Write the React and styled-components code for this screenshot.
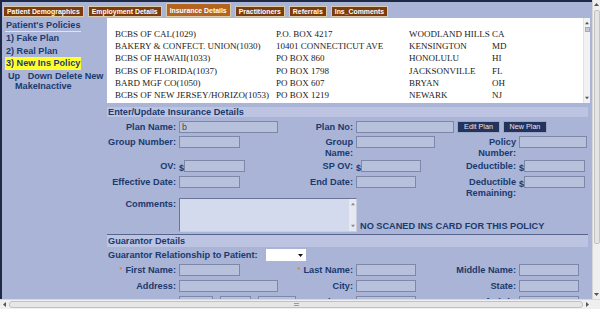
import React from 'react';
import styled, { createGlobalStyle } from 'styled-components';

const C = {
  bg: '#a9b4d6',
  navy: '#1b3a6e',
  bar: '#bdc4e2',
  field: '#b8c1dc',
  fieldBorder: '#7d87a7',
  frame: '#1e2946',
};

const Global = createGlobalStyle`
  html, body { margin: 0; padding: 0; background: ${C.bg}; overflow: hidden; }
  #root { width: 600px; height: 309px; }
  * { box-sizing: border-box; }
`;

const Viewport = styled.div`
  width: 600px;
  height: 309px;
  display: flex;
  flex-direction: column;
  font-family: "Liberation Sans", Arial, sans-serif;
  background: ${C.bg};
`;

const MainRow = styled.div`
  display: flex;
  height: 299px;
`;

const Frame = styled.div`
  width: 592px;
  height: 299px;
  border-top: 2px solid ${C.frame};
  border-left: 2px solid ${C.frame};
  background: ${C.bg};
  overflow: hidden;
  display: flex;
  flex-direction: column;
`;

const TabBar = styled.nav`
  height: 15px;
  flex: none;
  display: flex;
  align-items: flex-end;
  gap: 4px;
  padding-left: 1px;
`;

const Tab = styled.div`
  height: ${(p) => (p.$active ? 14 : 11)}px;
  padding: 0 3px;
  background: ${(p) => (p.$active ? '#b4641f' : '#7b3b0c')};
  border: 1px solid #dccbab;
  color: #fff;
  font-weight: bold;
  font-size: 6.9px;
  display: flex;
  align-items: center;
  white-space: nowrap;
`;

const Body = styled.div`
  display: flex;
  flex: 1;
  min-height: 0;
`;

const Sidebar = styled.aside`
  width: 105px;
  flex: none;
  padding: 3px 0 0 4px;
  color: ${C.navy};
  font-weight: bold;
  font-size: 9.1px;
`;

const SideHeading = styled.div`
  display: inline-block;
  margin-left: -1px;
  padding: 0 1px;
  line-height: 11px;
  border-bottom: 1px solid #dfe3f1;
`;

const PolicyItem = styled.div`
  line-height: 12.5px;
  span {
    display: inline-block;
    margin-left: -1px;
    padding: 0 1px;
    background: ${(p) => (p.$selected ? '#ffff2e' : 'transparent')};
  }
`;

const Actions = styled.div`
  margin-top: 1px;
  line-height: 10.5px;
`;

const ActionRow = styled.div`
  display: flex;
  gap: 2.5px;
  padding-left: ${(p) => p.$indent || 2}px;
`;

const ActionLink = styled.span`
  margin-right: ${(p) => (p.$wide ? 5 : 0)}px;
`;

const Content = styled.main`
  width: 483px;
  flex: none;
  display: flex;
  flex-direction: column;
`;

const ListBox = styled.div`
  margin-top: 1px;
  height: 85px;
  width: 483px;
  flex: none;
  background: #fff;
  display: flex;
`;

const ListTable = styled.div`
  flex: 1;
  padding: 10px 0 0 8px;
  display: grid;
  grid-template-columns: 161px 133px 83px auto;
  grid-auto-rows: 12.2px;
  align-content: start;
  font-family: "Liberation Serif", "Times New Roman", serif;
  font-size: 9px;
  line-height: 12.2px;
  color: #1a1a1a;
  white-space: nowrap;
`;

const MiniScroll = styled.div`
  width: 7px;
  flex: none;
  background: #f2f2f2;
  border-left: 1px solid #e2e2e2;
  display: flex;
  flex-direction: column;
  align-items: center;
  padding: 3px 0 3px;
`;

const MiniThumb = styled.div`
  width: 5px;
  height: 5px;
  margin-top: 2px;
  background: #c9c9d6;
  border: 1px solid #a8a8b8;
`;

const Spacer = styled.div`
  flex: 1;
`;

const SectionBar = styled.div`
  width: 481px;
  height: ${(p) => p.$h}px;
  margin-top: ${(p) => p.$mt || 0}px;
  flex: none;
  background: ${C.bar};
  color: ${C.navy};
  font-weight: bold;
  font-size: 9.2px;
  line-height: ${(p) => p.$h}px;
  padding-left: 1px;
  white-space: nowrap;
`;

const Divider = styled.div`
  width: 481px;
  height: 1px;
  margin-top: 2px;
  background: #56648e;
  flex: none;
`;

const FormGrid = styled.div`
  width: 481px;
  margin-top: ${(p) => p.$mt}px;
  display: grid;
  grid-template-columns: 72px 110px 67px 99px 64px 69px;
  grid-template-rows: ${(p) => p.$rows};
  row-gap: ${(p) => p.$gap}px;
  flex: none;
`;

const Label = styled.div`
  color: ${C.navy};
  font-weight: bold;
  font-size: 9.2px;
  line-height: 10.5px;
  padding-top: 1px;
  padding-right: 3px;
  text-align: right;
  white-space: nowrap;
`;

const Req = styled.span`
  color: #e0812c;
  font-size: 7px;
  margin-right: 3px;
  vertical-align: 1px;
`;

const Field = styled.div`
  display: flex;
  align-items: flex-start;
  gap: ${(p) => p.$gap || 0}px;
  grid-column: ${(p) => p.$span || 'auto'};
`;

const Input = styled.input`
  width: ${(p) => p.$w}px;
  height: 12px;
  flex: none;
  margin: 0;
  padding: 0 2px;
  border: 1px solid ${C.fieldBorder};
  background: ${C.field};
  font-family: Arial, "Liberation Sans", sans-serif;
  font-size: 9px;
  color: #5c4428;
  outline: none;
`;

const Dollar = styled.span`
  width: 5px;
  flex: none;
  color: ${C.navy};
  font-weight: bold;
  font-size: 9px;
  line-height: 10px;
  padding-top: 3px;
`;

const PlanButton = styled.button`
  width: ${(p) => p.$w}px;
  height: 12px;
  margin: 0 0 0 3px;
  padding: 0;
  flex: none;
  background: #22335c;
  border: 1px solid #9aa6c8;
  color: #e3e9f7;
  font-family: Arial, "Liberation Sans", sans-serif;
  font-size: 7.2px;
  line-height: 10px;
`;

const CommentBox = styled.div`
  width: 178px;
  height: 34px;
  flex: none;
  display: flex;
  background: #d3daee;
  border: 1px solid #6c7493;
  border-right-color: #c8cee0;
  border-bottom-color: #c8cee0;
`;

const CommentScroll = styled.div`
  width: 7px;
  margin-left: auto;
  background: #e6e9f2;
  display: flex;
  flex-direction: column;
  align-items: center;
  padding: 3px 0;
`;

const Note = styled.span`
  margin-left: 3px;
  color: ${C.navy};
  font-weight: bold;
  font-size: 9.2px;
  line-height: 10px;
  white-space: nowrap;
  padding-bottom: 1px;
`;

const CommentField = styled(Field)`
  align-items: flex-end;
`;

const RelRow = styled.div`
  margin-top: 2px;
  height: 12px;
  display: flex;
  align-items: center;
  gap: 8px;
  padding-left: 1px;
  flex: none;
`;

const RelLabel = styled.span`
  color: ${C.navy};
  font-weight: bold;
  font-size: 9.2px;
  white-space: nowrap;
`;

const SelectBox = styled.div`
  width: 40px;
  height: 12px;
  background: #fff;
  display: flex;
  align-items: center;
  justify-content: flex-end;
  padding-right: 3px;
`;

const VScroll = styled.div`
  width: 8px;
  height: 299px;
  flex: none;
  background: #efefef;
  border-left: 1px solid #d6d6d6;
  display: flex;
  flex-direction: column;
  align-items: center;
  padding: 2px 0 2px;
`;

const VThumb = styled.div`
  width: 6px;
  height: 234px;
  margin-top: 3px;
  background: #e4e4e4;
  border: 1px solid #c4c4c4;
  border-radius: 2px;
`;

const HScroll = styled.div`
  height: 10px;
  display: flex;
  align-items: center;
  background: #efefef;
  border-top: 1px solid #d8d8d8;
`;

const HArrow = styled.div`
  width: ${(p) => p.$w}px;
  flex: none;
  display: flex;
  justify-content: center;
  align-items: center;
`;

const HThumb = styled.div`
  flex: 1;
  height: 7px;
  background: #e6e6e6;
  border: 1px solid #c2c2c2;
  border-radius: 3px;
  display: flex;
  justify-content: center;
  align-items: center;
`;

const Grip = styled.div`
  width: 5px;
  height: 3px;
  border-top: 1px solid #9a9a9a;
  border-bottom: 1px solid #9a9a9a;
`;

const Corner = styled.div`
  width: 8px;
  flex: none;
`;

const Tri = ({ dir = 'down', size = 5, color = '#555' }) => {
  const pts = {
    up: '0,4 5,4 2.5,1',
    down: '0,1 5,1 2.5,4',
    left: '4,0 4,5 1,2.5',
    right: '1,0 1,5 4,2.5',
  }[dir];
  return (
    <svg width={size} height={size} viewBox="0 0 5 5" style={{ display: 'block' }}>
      <polygon points={pts} fill={color} />
    </svg>
  );
};

const tabs = ['Patient Demographics', 'Employment Details', 'Insurance Details', 'Practitioners', 'Referrals', 'Ins_Comments'];

const rows = [
  ['BCBS OF CAL(1029)', 'P.O. BOX 4217', 'WOODLAND HILLS', 'CA'],
  ['BAKERY & CONFECT. UNION(1030)', '10401 CONNECTICUT AVE', 'KENSINGTON', 'MD'],
  ['BCBS OF HAWAII(1033)', 'PO BOX 860', 'HONOLULU', 'HI'],
  ['BCBS OF FLORIDA(1037)', 'PO BOX 1798', 'JACKSONVILLE', 'FL'],
  ['BARD MGF CO(1050)', 'PO BOX 607', 'BRYAN', 'OH'],
  ['BCBS OF NEW JERSEY/HORIZO(1053)', 'PO BOX 1219', 'NEWARK', 'NJ'],
];

export default function App() {
  return (
    <Viewport>
      <Global />
      <MainRow>
        <Frame>
          <TabBar>
            {tabs.map((t) => (
              <Tab key={t} $active={t === 'Insurance Details'}>{t}</Tab>
            ))}
          </TabBar>
          <Body>
            <Sidebar>
              <SideHeading>Patient's Policies</SideHeading>
              <PolicyItem><span>1) Fake Plan</span></PolicyItem>
              <PolicyItem><span>2) Real Plan</span></PolicyItem>
              <PolicyItem $selected><span>3) New Ins Policy</span></PolicyItem>
              <Actions>
                <ActionRow>
                  <ActionLink $wide>Up</ActionLink>
                  <ActionLink>Down</ActionLink>
                  <ActionLink>Delete</ActionLink>
                  <ActionLink>New</ActionLink>
                </ActionRow>
                <ActionRow $indent={9}>
                  <ActionLink>MakeInactive</ActionLink>
                </ActionRow>
              </Actions>
            </Sidebar>
            <Content>
              <ListBox>
                <ListTable>
                  {rows.map((r) => r.map((c, i) => <div key={r[0] + i}>{c}</div>))}
                </ListTable>
                <MiniScroll>
                  <Tri dir="up" size={4} />
                  <MiniThumb />
                  <Spacer />
                  <Tri dir="down" size={4} />
                </MiniScroll>
              </ListBox>

              <SectionBar $h={10} $mt={4}>Enter/Update Insurance Details</SectionBar>
              <FormGrid $rows="12px 21px 13px 19px 34px" $gap={3} $mt={4}>
                <Label>Plan Name:</Label>
                <Field><Input $w={99} defaultValue="b" /></Field>
                <Label>Plan No:</Label>
                <Field $span="4 / span 3">
                  <Input $w={98} />
                  <PlanButton $w={43}>Edit Plan</PlanButton>
                  <PlanButton $w={44}>New Plan</PlanButton>
                </Field>

                <Label>Group Number:</Label>
                <Field><Input $w={61} /></Field>
                <Label>Group<br />Name:</Label>
                <Field><Input $w={79} /></Field>
                <Label>Policy<br />Number:</Label>
                <Field><Input $w={68} /></Field>

                <Label>OV:</Label>
                <Field><Dollar>$</Dollar><Input $w={61} /></Field>
                <Label>SP OV:</Label>
                <Field><Dollar>$</Dollar><Input $w={60} /></Field>
                <Label>Deductible:</Label>
                <Field><Dollar>$</Dollar><Input $w={61} /></Field>

                <Label>Effective Date:</Label>
                <Field><Input $w={61} /></Field>
                <Label>End Date:</Label>
                <Field><Input $w={60} /></Field>
                <Label>Deductible<br />Remaining:</Label>
                <Field><Dollar>$</Dollar><Input $w={61} /></Field>

                <Label>Comments:</Label>
                <CommentField $span="2 / span 5">
                  <CommentBox>
                    <CommentScroll>
                      <Tri dir="up" size={4} color="#888" />
                      <Spacer />
                      <Tri dir="down" size={4} color="#888" />
                    </CommentScroll>
                  </CommentBox>
                  <Note>NO SCANED INS CARD FOR THIS POLICY</Note>
                </CommentField>
              </FormGrid>

              <Divider />
              <SectionBar $h={12}>Guarantor Details</SectionBar>
              <RelRow>
                <RelLabel>Guarantor Relationship to Patient:</RelLabel>
                <SelectBox><Tri dir="down" size={5} color="#111" /></SelectBox>
              </RelRow>
              <FormGrid $rows="12px 12px 12px" $gap={4} $mt={3}>
                <Label><Req>*</Req>First Name:</Label>
                <Field><Input $w={61} /></Field>
                <Label><Req>*</Req>Last Name:</Label>
                <Field><Input $w={60} /></Field>
                <Label>Middle Name:</Label>
                <Field><Input $w={60} /></Field>

                <Label>Address:</Label>
                <Field><Input $w={99} /></Field>
                <Label>City:</Label>
                <Field><Input $w={60} /></Field>
                <Label>State:</Label>
                <Field><Input $w={60} /></Field>

                <Label><Req>*</Req>SSN:</Label>
                <Field $gap={7}><Input $w={34} /><Input $w={31} /><Input $w={38} /></Field>
                <Label>Employer:</Label>
                <Field><Input $w={60} /></Field>
                <Label>Date of Birth:</Label>
                <Field><Input $w={60} /></Field>
              </FormGrid>
            </Content>
          </Body>
        </Frame>
        <VScroll>
          <Tri dir="up" size={5} />
          <VThumb />
          <Spacer />
          <Tri dir="down" size={5} />
        </VScroll>
      </MainRow>
      <HScroll>
        <HArrow $w={9}><Tri dir="left" size={5} /></HArrow>
        <HThumb><Grip /></HThumb>
        <HArrow $w={9}><Tri dir="right" size={5} /></HArrow>
        <Corner />
      </HScroll>
    </Viewport>
  );
}
